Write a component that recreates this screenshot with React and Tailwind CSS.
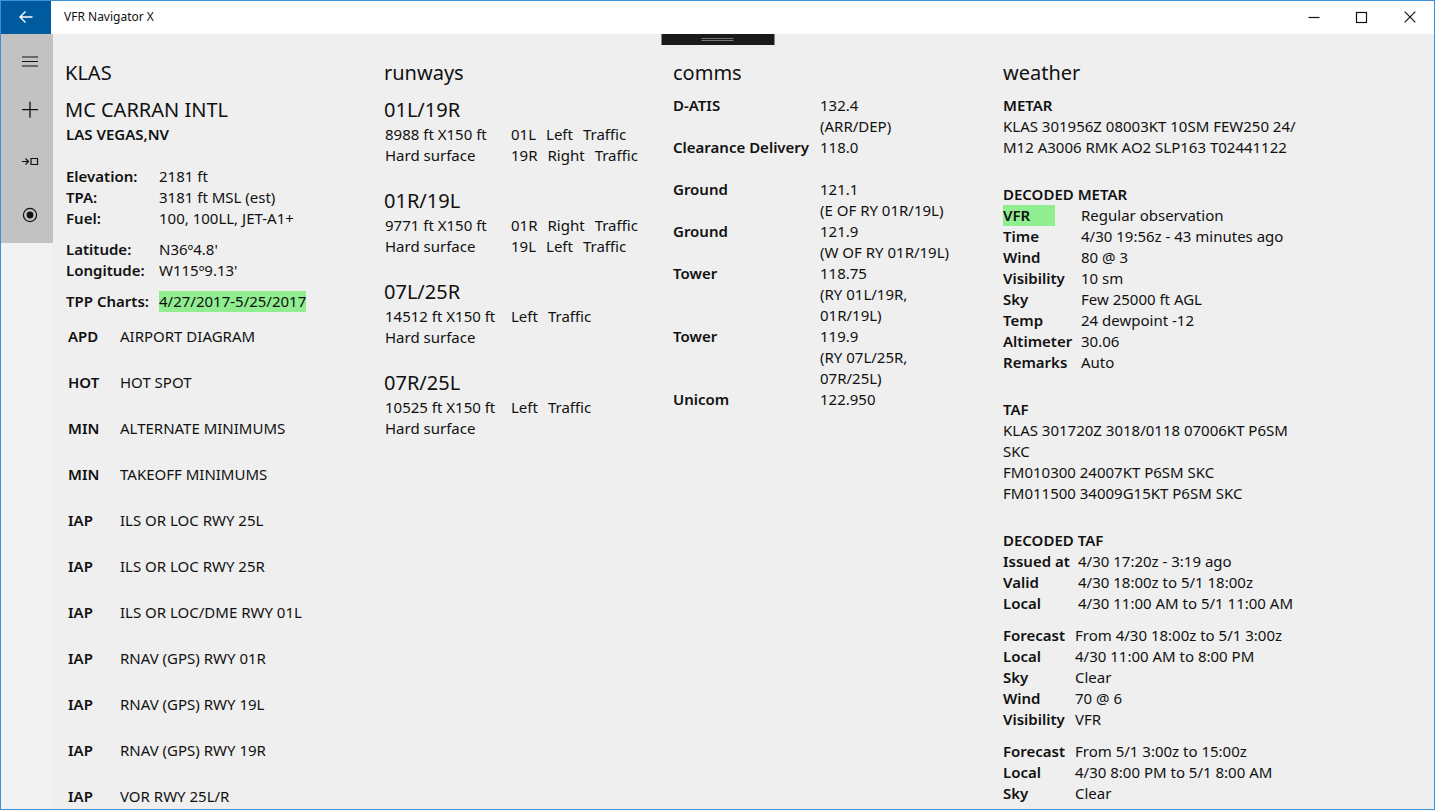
import React from "react";

const charts = [
  ["APD", "AIRPORT DIAGRAM"],
  ["HOT", "HOT SPOT"],
  ["MIN", "ALTERNATE MINIMUMS"],
  ["MIN", "TAKEOFF MINIMUMS"],
  ["IAP", "ILS OR LOC RWY 25L"],
  ["IAP", "ILS OR LOC RWY 25R"],
  ["IAP", "ILS OR LOC/DME RWY 01L"],
  ["IAP", "RNAV (GPS) RWY 01R"],
  ["IAP", "RNAV (GPS) RWY 19L"],
  ["IAP", "RNAV (GPS) RWY 19R"],
  ["IAP", "VOR RWY 25L/R"],
];

const runways = [
  { name: "01L/19R", size: "8988 ft X150 ft", traffic: [["01L", "Left"], ["19R", "Right"]] },
  { name: "01R/19L", size: "9771 ft X150 ft", traffic: [["01R", "Right"], ["19L", "Left"]] },
  { name: "07L/25R", size: "14512 ft X150 ft", traffic: [["", "Left"]] },
  { name: "07R/25L", size: "10525 ft X150 ft", traffic: [["", "Left"]] },
];

const comms = [
  ["D-ATIS", "132.4", "(ARR/DEP)"],
  ["Clearance Delivery", "118.0", ""],
  ["Ground", "121.1", "(E OF RY 01R/19L)"],
  ["Ground", "121.9", "(W OF RY 01R/19L)"],
  ["Tower", "118.75", "(RY 01L/19R,\n01R/19L)"],
  ["Tower", "119.9", "(RY 07L/25R,\n07R/25L)"],
  ["Unicom", "122.950", ""],
];

const decodedMetar = [
  ["VFR", "Regular observation"],
  ["Time", "4/30 19:56z - 43 minutes ago"],
  ["Wind", "80 @ 3"],
  ["Visibility", "10 sm"],
  ["Sky", "Few 25000 ft AGL"],
  ["Temp", "24 dewpoint -12"],
  ["Altimeter", "30.06"],
  ["Remarks", "Auto"],
];

const issued = [
  ["Issued at", "4/30 17:20z - 3:19 ago"],
  ["Valid", "4/30 18:00z to 5/1 18:00z"],
  ["Local", "4/30 11:00 AM to 5/1 11:00 AM"],
];

const forecasts = [
  [
    ["Forecast", "From 4/30 18:00z to 5/1 3:00z"],
    ["Local", "4/30 11:00 AM to 8:00 PM"],
    ["Sky", "Clear"],
    ["Wind", "70 @ 6"],
    ["Visibility", "VFR"],
  ],
  [
    ["Forecast", "From 5/1 3:00z to 15:00z"],
    ["Local", "4/30 8:00 PM to 5/1 8:00 AM"],
    ["Sky", "Clear"],
  ],
];

function Pairs({ rows, className, highlightLabel, highlightValue }) {
  return (
    <dl className={"grid whitespace-nowrap " + className}>
      {rows.map(([label, value]) => (
        <React.Fragment key={label}>
          <dt className="font-semibold">
            {label === highlightLabel ? (
              <span className="block w-[52px] bg-[#90ee90]">{label}</span>
            ) : (
              label
            )}
          </dt>
          <dd>
            {value === highlightValue ? (
              <span className="inline-block bg-[#90ee90]">{value}</span>
            ) : (
              value
            )}
          </dd>
        </React.Fragment>
      ))}
    </dl>
  );
}

function Heading({ children }) {
  return <h2 className="mb-[7px] text-xl leading-[30px]">{children}</h2>;
}

function Name({ children }) {
  return <h3 className="pt-px text-xl leading-7">{children}</h3>;
}

function Icon({ children, size = 16 }) {
  return (
    <svg
      width={size}
      height={size}
      viewBox={`0 0 ${size} ${size}`}
      fill="none"
      stroke="currentColor"
      strokeWidth="1"
      aria-hidden="true"
    >
      {children}
    </svg>
  );
}

function TitleBar() {
  return (
    <header className="flex h-[33px] shrink-0 items-stretch bg-white">
      <button aria-label="Back" className="flex w-[50px] items-center justify-center bg-[#005a9e] pb-[2px] text-white">
        <Icon>
          <path d="M2 8H14.5M7.5 2.5L2 8L7.5 13.5" strokeWidth="1.4" />
        </Icon>
      </button>
      <h1 className="grow self-center pb-[2px] pl-[13px] text-xs">VFR Navigator X</h1>
      <button aria-label="Minimize" className="flex w-12 items-center justify-center pb-[2px]">
        <Icon>
          <path d="M2.5 8.5H13.5" strokeWidth="1.2" />
        </Icon>
      </button>
      <button aria-label="Maximize" className="flex w-12 items-center justify-center pb-[2px]">
        <Icon>
          <rect x="2.5" y="3.5" width="10" height="10" strokeWidth="1.2" />
        </Icon>
      </button>
      <button aria-label="Close" className="flex w-12 items-center justify-center pb-[2px]">
        <Icon>
          <path d="M2.7 2.7L13.3 13.3M13.3 2.7L2.7 13.3" strokeWidth="1.2" />
        </Icon>
      </button>
    </header>
  );
}

function SideBar() {
  return (
    <nav className="w-[52px] shrink-0 bg-[#f2f2f2]">
      <div className="flex flex-col bg-[#c2c2c2] pt-1 pb-px pl-[5px]">
        <button aria-label="Menu" className="flex h-12 items-center justify-center">
          <Icon size={18}>
            <path d="M1 4H17M1 8.5H17M1 13H17" strokeWidth="1.2" />
          </Icon>
        </button>
        <button aria-label="Add" className="flex h-12 items-center justify-center">
          <Icon size={18}>
            <path d="M1 8.7H17M9 0.7V16.7" strokeWidth="1.3" />
          </Icon>
        </button>
        <button aria-label="Direct to" className="flex h-[54px] items-center justify-center">
          <Icon size={18}>
            <path d="M1 9.5H7.5M4.5 6.5L7.5 9.5L4.5 12.5M10 6.5H16.5V12.5H10Z" strokeWidth="1.2" />
          </Icon>
        </button>
        <button aria-label="Record" className="flex h-[54px] items-center justify-center">
          <Icon size={18}>
            <circle cx="9" cy="9" r="6.6" strokeWidth="1.2" />
            <circle cx="9" cy="9" r="3.4" fill="currentColor" stroke="none" />
          </Icon>
        </button>
      </div>
    </nav>
  );
}

function Airport() {
  return (
    <section>
      <Heading>KLAS</Heading>
      <Name>MC CARRAN INTL</Name>
      <div className="pl-px">
        <p className="font-semibold">LAS VEGAS,NV</p>
        <Pairs
          className="mt-[21px] grid-cols-[93px_1fr]"
          rows={[
            ["Elevation:", "2181 ft"],
            ["TPA:", "3181 ft MSL (est)"],
            ["Fuel:", "100, 100LL, JET-A1+"],
          ]}
        />
        <Pairs
          className="mt-[10px] grid-cols-[93px_1fr]"
          rows={[
            ["Latitude:", "N36º4.8'"],
            ["Longitude:", "W115º9.13'"],
          ]}
        />
        <Pairs
          className="mt-[10px] grid-cols-[93px_1fr]"
          rows={[["TPP Charts:", "4/27/2017-5/25/2017"]]}
          highlightValue="4/27/2017-5/25/2017"
        />
        <ul className="mt-px">
          {charts.map(([kind, title]) => (
            <li key={title}>
              <button className="flex h-[46px] w-full items-center pl-[2px] text-left whitespace-nowrap">
                <span className="w-[52px] shrink-0 font-semibold">{kind}</span>
                <span>{title}</span>
              </button>
            </li>
          ))}
        </ul>
      </div>
    </section>
  );
}

function Runways() {
  return (
    <section>
      <Heading>runways</Heading>
      <div className="flex max-w-[254px] flex-col gap-5 overflow-hidden whitespace-nowrap">
        {runways.map((runway) => (
          <article key={runway.name}>
            <Name>{runway.name}</Name>
            <div className="flex pl-px">
              <div className="w-[126px] shrink-0">
                <p>{runway.size}</p>
                <p>Hard surface</p>
              </div>
              <div>
                {runway.traffic.map(([end, side]) => (
                  <p key={end + side} className="flex gap-[10px]">
                    {end && <span>{end}</span>}
                    <span>{side}</span>
                    <span>Traffic</span>
                  </p>
                ))}
              </div>
            </div>
          </article>
        ))}
      </div>
    </section>
  );
}

function Comms() {
  return (
    <section>
      <Heading>comms</Heading>
      <dl className="grid grid-cols-[147px_1fr]">
        {comms.map(([label, frequency, note], index) => (
          <React.Fragment key={index}>
            <dt className="font-semibold whitespace-nowrap">{label}</dt>
            <dd className="min-h-[42px] whitespace-pre">
              <p>{frequency}</p>
              <p>{note}</p>
            </dd>
          </React.Fragment>
        ))}
      </dl>
    </section>
  );
}

function Weather() {
  return (
    <section>
      <Heading>weather</Heading>
      <div className="flex flex-col gap-[26px]">
        <div>
          <h3 className="font-semibold">METAR</h3>
          <p className="whitespace-pre">
            {"KLAS 301956Z 08003KT 10SM FEW250 24/\nM12 A3006 RMK AO2 SLP163 T02441122"}
          </p>
        </div>
        <div>
          <h3 className="font-semibold">DECODED METAR</h3>
          <Pairs className="grid-cols-[78px_1fr]" rows={decodedMetar} highlightLabel="VFR" />
        </div>
        <div>
          <h3 className="font-semibold">TAF</h3>
          <p className="whitespace-pre">
            {"KLAS 301720Z 3018/0118 07006KT P6SM\nSKC\nFM010300 24007KT P6SM SKC\nFM011500 34009G15KT P6SM SKC"}
          </p>
        </div>
        <div>
          <h3 className="font-semibold">DECODED TAF</h3>
          <Pairs className="grid-cols-[75px_1fr]" rows={issued} />
          {forecasts.map((rows) => (
            <Pairs key={rows[0][1]} className="mt-[11px] grid-cols-[72px_1fr]" rows={rows} />
          ))}
        </div>
      </div>
    </section>
  );
}

export default function App() {
  return (
    <div className="relative flex h-screen flex-col overflow-hidden border border-[#3c91d8] bg-[#efefef] font-['Noto_Sans','Open_Sans',sans-serif] text-[15px] leading-[21px] text-[#111111]">
      <TitleBar />
      <div className="absolute top-[33px] left-1/2 flex h-[11px] w-[113px] -translate-x-1/2 flex-col items-center justify-center gap-px bg-[#1a1a1a]">
        <span className="h-px w-8 bg-[#777777]" />
        <span className="h-px w-8 bg-[#777777]" />
      </div>
      <div className="flex min-h-0 grow">
        <SideBar />
        <main className="grid grow grid-cols-[319fr_289fr_330fr_431fr] overflow-auto pt-6 pl-3 [scrollbar-width:none]">
          <Airport />
          <Runways />
          <Comms />
          <Weather />
        </main>
      </div>
    </div>
  );
}
